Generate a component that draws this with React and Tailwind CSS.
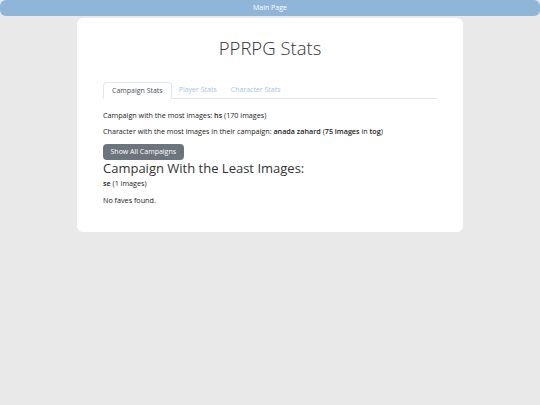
const tabs = ["Campaign Stats", "Player Stats", "Character Stats"];

export default function App() {
  return (
    <div
      className="min-h-[405px] bg-[#e9e9e9] text-[#222]"
      style={{ fontFamily: '"Open Sans", "DejaVu Sans", sans-serif' }}
    >
      {/* top nav */}
      <div className="h-4 bg-[#8fb5d9] rounded-md flex items-center justify-center text-white text-[7px]">
        Main Page
      </div>

      {/* card */}
      <div className="mx-auto mt-[2px] w-[386px] bg-white rounded-md px-[26px] pt-[19px] pb-[27px]">
        <h1 className="text-center text-[18.5px] leading-[22px] font-light text-[#333]">
          PPRPG Stats
        </h1>

        <div className="mt-[23px] flex h-[17px] border-b border-[#e4e7ea] text-[7px]">
          {tabs.map((t, i) =>
            i === 0 ? (
              <div
                key={t}
                className="px-[8px] flex items-center border border-b-0 border-[#e4e7ea] rounded-t-sm text-[#495057] bg-white -mb-px"
              >
                {t}
              </div>
            ) : (
              <div key={t} className="px-[7px] flex items-center text-[#a9c5e2]">
                {t}
              </div>
            )
          )}
        </div>

        <div className="text-[7.2px] leading-[10px]">
          <p className="mt-[11px]">
            Campaign with the most images: <b className="font-semibold">hs</b> (170 images)
          </p>
          <p className="mt-[6px]">
            Character with the most images in their campaign:{" "}
            <b className="font-semibold">anada zahard</b> (
            <b className="font-semibold">75 images</b> in <b className="font-semibold">tog</b>)
          </p>
        </div>

        <button className="mt-[7px] h-4 px-[7.5px] bg-[#6c757d] text-white text-[7px] rounded-sm">
          Show All Campaigns
        </button>

        <h2 className="mt-px text-[13px] leading-[14px] text-[#333]">
          Campaign With the Least Images:
        </h2>
        <p className="mt-[3px] text-[7.2px] leading-[10px]">
          <b className="font-semibold">se</b> (1 images)
        </p>
        <p className="mt-[7px] text-[7.2px] leading-[10px]">No faves found.</p>
      </div>
    </div>
  );
}
